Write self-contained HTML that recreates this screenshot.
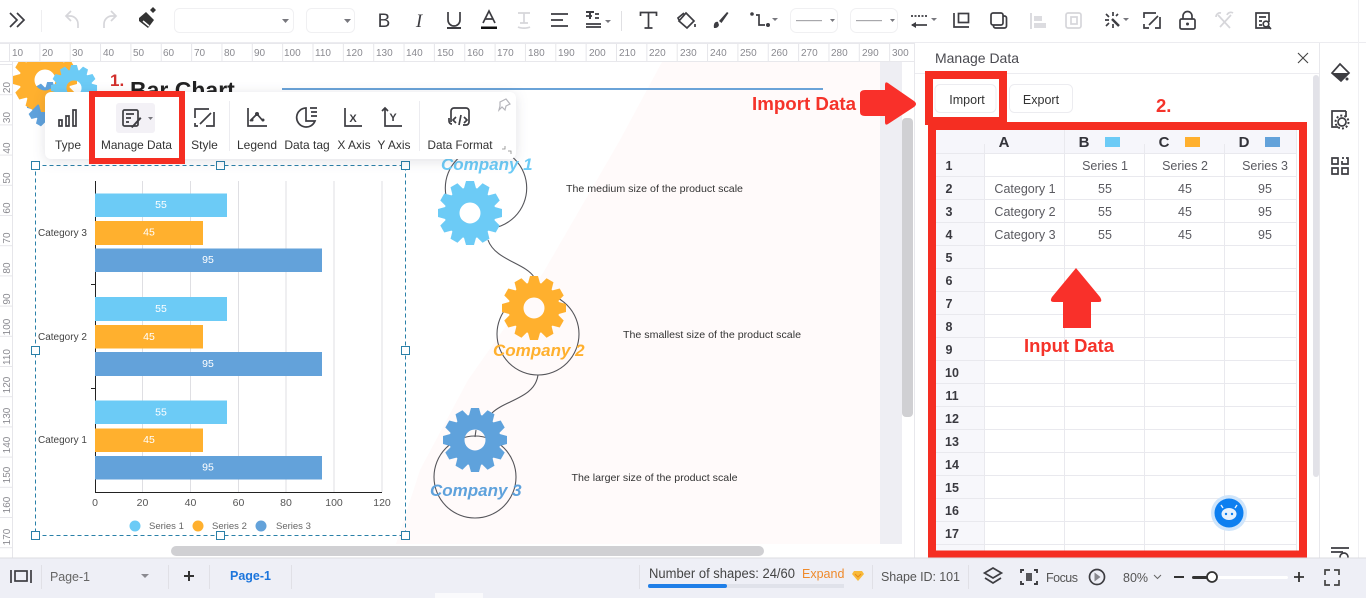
<!DOCTYPE html>
<html><head><meta charset="utf-8"><title>Manage Data</title>
<style>
html,body{margin:0;padding:0;background:#fff;width:1366px;height:598px;overflow:hidden}
svg{display:block}
text{font-family:"Liberation Sans",sans-serif}
.ic{fill:none;stroke:#3d3d42;stroke-width:1.7}
.gy{fill:none;stroke:#d6d6da;stroke-width:1.7}
.r{font-size:10px;fill:#8a8a90}
.tl{font-size:12px;fill:#333;text-anchor:middle}
.rh{font-size:12.5px;font-weight:bold;fill:#3a3a40;text-anchor:middle}
.cell{font-size:12.5px;fill:#5a5a60;text-anchor:middle}
.hd{font-size:15px;font-weight:bold;fill:#33333a;text-anchor:middle}
.bl{font-size:10.5px;fill:#fff;text-anchor:middle}
.ax{font-size:10.5px;fill:#555;text-anchor:middle}
.cat{font-size:10px;fill:#444}
.lg{font-size:9.5px;fill:#666}
.co{font-size:17px;font-weight:bold;font-style:italic}
.de{font-size:10.5px;fill:#333}
.red{font-weight:bold;fill:#f5332a}
.st{font-size:12.5px;fill:#555}
</style></head><body>
<svg width="1366" height="598" viewBox="0 0 1366 598" xmlns="http://www.w3.org/2000/svg">
<defs>
<polygon id="tooth" points="23,-6.500 32,-4 32,4 23,6.500" fill="currentColor"/>
<g id="gear">
<use href="#tooth"/><use href="#tooth" transform="rotate(30)"/><use href="#tooth" transform="rotate(60)"/><use href="#tooth" transform="rotate(90)"/><use href="#tooth" transform="rotate(120)"/><use href="#tooth" transform="rotate(150)"/><use href="#tooth" transform="rotate(180)"/><use href="#tooth" transform="rotate(210)"/><use href="#tooth" transform="rotate(240)"/><use href="#tooth" transform="rotate(270)"/><use href="#tooth" transform="rotate(300)"/><use href="#tooth" transform="rotate(330)"/>
<circle r="18" fill="none" stroke="currentColor" stroke-width="15"/></g>
<clipPath id="cv"><rect x="13" y="62" width="867" height="482"/></clipPath>
<pattern id="tx" x="9" y="43" width="30.35" height="19" patternUnits="userSpaceOnUse"><rect width="1" height="19" fill="#e6e6ea"/></pattern>
<pattern id="ty" x="0" y="64" width="13" height="30.2" patternUnits="userSpaceOnUse"><rect width="13" height="1" fill="#e6e6ea"/></pattern>
</defs>

<rect width="1366" height="598" fill="#fff"/>

<!-- canvas -->
<g clip-path="url(#cv)">
<polygon points="662,62 880,62 880,544 396,544 420,470 468,380 543,273 620,140" fill="#fffafa"/>
<use href="#gear" transform="translate(50 105) scale(.72)" style="color:#5fa2dc"/>
<use href="#gear" transform="translate(45 80)" style="color:#ffb02e"/>
<use href="#gear" transform="translate(74 88) scale(.72)" style="color:#6ccbf6"/>
<text x="130" y="98" font-size="23" font-weight="bold" fill="#222">Bar Chart</text>
<rect x="282" y="88" width="541" height="2" fill="#6aa3d8"/>
<text x="110" y="86" font-size="17" font-weight="bold" fill="#d2302c">1.</text>

<!-- right infographic -->
<g fill="none" stroke="#55555a" stroke-width="1.1">
<circle cx="486" cy="188" r="40.7"/><circle cx="538" cy="334" r="41"/><circle cx="475" cy="477" r="41"/>
<path d="M488 240C495 260 525 263 534 277M538 375C535 398 505 400 492 413M476 430L475 437"/>
</g>
<use href="#gear" transform="translate(470 213)" style="color:#6ccbf6"/>
<use href="#gear" transform="translate(534 308)" style="color:#ffb02e"/>
<use href="#gear" transform="translate(475 440)" style="color:#5fa2dc"/>
<text class="co" x="441" y="170" fill="#6ccbf6">Company 1</text>
<text class="co" x="493" y="356" fill="#ffb02e">Company 2</text>
<text class="co" x="430" y="496" fill="#5fa2dc">Company 3</text>
<text class="de" x="566" y="192" textLength="177" lengthAdjust="spacingAndGlyphs">The medium size of the product scale</text>
<text class="de" x="623" y="338" textLength="178" lengthAdjust="spacingAndGlyphs">The smallest size of the product scale</text>
<text class="de" x="571.5" y="481" textLength="166" lengthAdjust="spacingAndGlyphs">The larger size of the product scale</text>

<!-- chart -->
<g stroke="#dfdfe3" stroke-width="1">
<path d="M142.5 181V492M190.5 181V492M238.5 181V492M286 181V492M334 181V492M382 181V492"/>
</g>
<path d="M95.5 181V493M95 492.5H382M91 284.5H95M91 388.5H95" stroke="#222" stroke-width="1" fill="none"/>
<g fill="#6ccbf6"><rect x="95" y="193.500" width="132" height="23.500"/><rect x="95" y="297" width="132" height="24"/><rect x="95" y="400.500" width="132" height="23.500"/></g>
<g fill="#ffb02e"><rect x="95" y="221" width="108" height="24"/><rect x="95" y="325" width="108" height="23.500"/><rect x="95" y="428.500" width="108" height="23.500"/></g>
<g fill="#63a2da"><rect x="95" y="248.500" width="227" height="23.500"/><rect x="95" y="352" width="227" height="24"/><rect x="95" y="456" width="227" height="23.500"/></g>
<text class="bl" x="161" y="208">55</text><text class="bl" x="149" y="235.500">45</text><text class="bl" x="208" y="263">95</text>
<text class="bl" x="161" y="312">55</text><text class="bl" x="149" y="340">45</text><text class="bl" x="208" y="367">95</text>
<text class="bl" x="161" y="415.500">55</text><text class="bl" x="149" y="443">45</text><text class="bl" x="208" y="470.500">95</text>
<text class="cat" x="38" y="236">Category 3</text><text class="cat" x="38" y="340">Category 2</text><text class="cat" x="38" y="443">Category 1</text>
<text class="ax" x="95" y="506">0</text><text class="ax" x="142.500" y="506">20</text><text class="ax" x="190.500" y="506">40</text><text class="ax" x="238.500" y="506">60</text><text class="ax" x="286" y="506">80</text><text class="ax" x="334" y="506">100</text><text class="ax" x="382" y="506">120</text>
<circle cx="135" cy="526" r="5.500" fill="#6ccbf6"/><circle cx="198" cy="526" r="5.500" fill="#ffb02e"/><circle cx="261" cy="526" r="5.500" fill="#63a2da"/>
<text class="lg" x="149" y="529">Series 1</text><text class="lg" x="212" y="529">Series 2</text><text class="lg" x="276" y="529">Series 3</text>

<!-- selection -->
<rect x="35.500" y="165.500" width="370" height="370" fill="none" stroke="#2a80a8" stroke-dasharray="4 3"/>
<g fill="#fff" stroke="#2a80a8"><rect x="31.500" y="161.500" width="8" height="8"/><rect x="216.500" y="161.500" width="8" height="8"/><rect x="401.500" y="161.500" width="8" height="8"/><rect x="31.500" y="346.500" width="8" height="8"/><rect x="401.500" y="346.500" width="8" height="8"/><rect x="31.500" y="531.500" width="8" height="8"/><rect x="216.500" y="531.500" width="8" height="8"/><rect x="401.500" y="531.500" width="8" height="8"/></g>
</g>

<!-- canvas side gutter and scrollbars -->
<rect x="880" y="62" width="22" height="482" fill="#eeeef3"/>
<rect x="902" y="118" width="11" height="299" rx="4" fill="#d0d0d3"/>
<rect x="171" y="546" width="593" height="10" rx="5" fill="#d0d0d3"/>

<!-- rulers -->
<rect x="13" y="43" width="902" height="19" fill="#fff"/>
<rect x="9" y="43" width="905" height="19" fill="url(#tx)"/>
<rect x="0" y="43" width="914" height="1" fill="#e8e8ec"/><rect x="0" y="61" width="914" height="1" fill="#e8e8ec"/>
<rect x="0" y="62" width="13" height="496" fill="#fff"/>
<rect x="0" y="64" width="13" height="494" fill="url(#ty)"/>
<rect x="12" y="62" width="1" height="496" fill="#e6e6ea"/>
<g class="rx">
<text class="r" x="12" y="56">10</text><text class="r" x="42" y="56">20</text><text class="r" x="72" y="56">30</text><text class="r" x="103" y="56">40</text><text class="r" x="133" y="56">50</text><text class="r" x="163" y="56">60</text><text class="r" x="194" y="56">70</text><text class="r" x="224" y="56">80</text><text class="r" x="254" y="56">90</text><text class="r" x="284" y="56">100</text><text class="r" x="315" y="56">110</text><text class="r" x="346" y="56">120</text><text class="r" x="376" y="56">130</text><text class="r" x="406" y="56">140</text><text class="r" x="437" y="56">150</text><text class="r" x="467" y="56">160</text><text class="r" x="497" y="56">170</text><text class="r" x="528" y="56">180</text><text class="r" x="558" y="56">190</text><text class="r" x="589" y="56">200</text><text class="r" x="619" y="56">210</text><text class="r" x="649" y="56">220</text><text class="r" x="680" y="56">230</text><text class="r" x="710" y="56">240</text><text class="r" x="740" y="56">250</text><text class="r" x="771" y="56">260</text><text class="r" x="801" y="56">270</text><text class="r" x="831" y="56">280</text><text class="r" x="862" y="56">290</text><text class="r" x="892" y="56">300</text>
</g>
<g text-anchor="middle">
<text class="r" transform="translate(10 87.500) rotate(-90)">20</text><text class="r" transform="translate(10 117.500) rotate(-90)">30</text><text class="r" transform="translate(10 148) rotate(-90)">40</text><text class="r" transform="translate(10 178) rotate(-90)">50</text><text class="r" transform="translate(10 208) rotate(-90)">60</text><text class="r" transform="translate(10 238) rotate(-90)">70</text><text class="r" transform="translate(10 268) rotate(-90)">80</text><text class="r" transform="translate(10 299) rotate(-90)">90</text><text class="r" transform="translate(10 327) rotate(-90)">100</text><text class="r" transform="translate(10 357) rotate(-90)">110</text><text class="r" transform="translate(10 385) rotate(-90)">120</text><text class="r" transform="translate(10 416) rotate(-90)">130</text><text class="r" transform="translate(10 445) rotate(-90)">140</text><text class="r" transform="translate(10 475) rotate(-90)">150</text><text class="r" transform="translate(10 505) rotate(-90)">160</text><text class="r" transform="translate(10 537) rotate(-90)">170</text>
</g>

<!-- toolbar -->
<rect x="0" y="42" width="1366" height="1" fill="#ececf0"/>
<path class="ic" d="M10 13l7 7-7 7M17 13l7 7-7 7" stroke-width="1.600"/>
<rect x="41" y="10" width="1" height="22" fill="#eeeef0"/>
<path class="gy" d="M78 28v-4a8 8 0 0 0-8-8h-3M71 11l-5 5 5 5M104 28v-4a8 8 0 0 1 8-8h3M111 11l5 5-5 5"/>
<path d="M139 18l7-6 8 8-6 8-9-7zM150 10l3-3 3 3-3 3z" fill="#333"/><path d="M143 21l6 5" stroke="#fff" stroke-width="1.500"/>
<rect x="174.500" y="8.500" width="119" height="24" rx="5" fill="#fff" stroke="#f0f0f2"/><path d="M282 19h7l-3.500 4z" fill="#77777d"/>
<rect x="306.500" y="8.500" width="48" height="24" rx="5" fill="#fff" stroke="#f0f0f2"/><path d="M344 19h7l-3.500 4z" fill="#77777d"/>

<text x="384" y="27" font-size="19" text-anchor="middle" fill="#3d3d42">B</text>
<text x="419" y="27" font-size="19" font-style="italic" text-anchor="middle" fill="#3d3d42" style="font-family:'Liberation Serif',serif">I</text>
<path class="ic" d="M448 12v8a6 6 0 0 0 12 0v-8"/><rect x="447" y="27" width="14" height="2" fill="#3d3d42"/>
<path class="ic" d="M483 23l6-12 6 12M485 19h8"/><rect x="481" y="26.500" width="16" height="2.500" fill="#111"/>
<path class="gy" d="M518 13h12M524 13v10M520 23h8M518 27c3 1.500 9 1.500 12 0"/>
<path class="ic" d="M551 14h17M551 20h12M551 26h17"/>
<path class="ic" d="M586 24h15M586 27h15M586 16h6M595 14h4M595 18h4"/><path d="M586 11h8v2h-3v6h-2v-6h-3z" fill="#3d3d42"/><path d="M605 20h6l-3 3z" fill="#77777d"/>
<rect x="621" y="11" width="1" height="20" fill="#e0e0e3"/>
<path class="ic" d="M640.500 16v-3.500h16v3.500M648.500 12.500v15.500M644.500 28h8" stroke-width="2"/>
<path class="ic" d="M686 13l8 8-7 7-8-7zM679 20l-1-2 6-5M695 24v3"/>
<path d="M714 28c-1-5 2-7 4-6l1 3c-1 3-3 3-5 3zM719 21l8-9 1.500 1-7 10z" fill="#3d3d42"/>
<circle cx="752" cy="14" r="1.800" fill="#3d3d42"/><circle cx="768" cy="25" r="2" fill="#3d3d42"/><path class="ic" d="M756 15h3v10h6"/><path d="M772 18h6l-3 3z" fill="#77777d"/>
<rect x="790.500" y="8.500" width="47" height="24" rx="6" fill="#fff" stroke="#f0f0f2"/><rect x="796" y="20" width="26" height="1.200" fill="#a8a8ac"/><path d="M830 19h5l-2.500 3z" fill="#77777d"/>
<rect x="850.500" y="8.500" width="47" height="24" rx="6" fill="#fff" stroke="#f0f0f2"/><rect x="856" y="20" width="26" height="1.200" fill="#a8a8ac"/><path d="M890 19h5l-2.500 3z" fill="#77777d"/>
<path class="ic" d="M911 16h16" stroke-dasharray="2 1.500"/><path class="ic" d="M912 25h15"/><path d="M911 25l5-3v6z" fill="#3d3d42"/><path d="M931 18h6l-3 3z" fill="#77777d"/>
<path class="ic" d="M954 13v14h15" stroke-width="1.800"/><rect x="958.500" y="13.500" width="10" height="9" class="ic" stroke-width="1.600"/>
<rect x="991" y="13" width="12" height="12" rx="2" class="ic" stroke-width="1.800"/><path class="ic" d="M1003 16h1.500a2 2 0 0 1 2 2v8a2 2 0 0 1-2 2h-9a2 2 0 0 1-2-2v-1" stroke-width="1.600"/>
<path d="M1030 13h2v16h-2zM1034 16h8v5h-8zM1034 23h12v5h-12z" fill="#dcdce0"/>
<rect x="1066" y="13" width="15" height="15" rx="2" class="gy" stroke-width="2.500"/><rect x="1071" y="17" width="6" height="7" class="gy"/>
<g class="ic"><path d="M1105 20h4M1113 12v4M1106 14l3 3M1106 26l3-3M1113 24v4M1118 14l-2 2"/><path d="M1112 19l7 7" stroke-width="2.500"/></g><path d="M1123 18h6l-3 3z" fill="#77777d"/>
<path class="ic" d="M1144 24v4h5M1144 18v-5h12M1160 17v11h-5" stroke-width="1.900"/><path class="ic" d="M1149 25l9-9" stroke-width="2.500"/>
<rect x="1180" y="19" width="15" height="10" rx="1.500" class="ic" stroke-width="2"/><path class="ic" d="M1183 19v-3a4.500 4.500 0 0 1 9 0v3" stroke-width="2"/><circle cx="1187.500" cy="24" r="1.500" fill="#3d3d42"/>
<path class="gy" d="M1218 15l12 13M1231 15l-11 12M1216 17a4 4 0 0 1 5-4M1227 15a4 4 0 0 1 6-2" stroke-width="2.400"/>
<path class="ic" d="M1269 26v2h-13V13h13v9" stroke-width="1.900"/><path class="ic" d="M1259 17h7M1259 21h3M1259 25h3"/><circle cx="1266" cy="24" r="2.800" class="ic"/><path class="ic" d="M1268 26l3 3"/>

<!-- floating bar -->
<rect x="45" y="92" width="471" height="67" rx="6" fill="#fff" style="filter:drop-shadow(0 2px 6px rgba(40,40,70,.14))"/>
<rect x="116" y="103" width="39" height="30" rx="3" fill="#f3f1f6"/>
<path class="ic" d="M59 120v6h3v-6zM66 116v10h3v-10zM73 110v16h3v-16z" stroke-width="1.800"/>
<rect x="123" y="110" width="15" height="16" rx="1.500" class="ic"/><path class="ic" d="M126 114h8M126 118h5M126 122h3"/><path d="M131 127l9-10 1.500 1.500-9 9.500z" fill="#3d3d42"/><path d="M148 117h5l-2.500 3z" fill="#77777d"/>
<path class="ic" d="M195 118v-9h14M214 112v14h-8M195 123v3h3" stroke-width="1.800"/><path class="ic" d="M200 124l11-11" stroke-width="2.400"/>
<rect x="229" y="101" width="1" height="50" fill="#ececf0"/>
<path class="ic" d="M248 108v18h19"/><path class="ic" d="M250 121l7-7 6 7"/><circle cx="257" cy="114" r="2" fill="#3d3d42"/><circle cx="252" cy="120" r="1.500" fill="#3d3d42"/><circle cx="263" cy="120" r="1.500" fill="#3d3d42"/>
<path class="ic" d="M306 108a9.500 9.500 0 1 0 9 13h-9zM310 108h7M311 112h6M311 116h6" stroke-width="1.800"/>
<path class="ic" d="M345 108v18h17"/><text x="353" y="122" font-size="11" font-weight="bold" text-anchor="middle" fill="#3d3d42">X</text>
<path class="ic" d="M385 108v18h17M382 111l3-3 3 3"/><text x="393" y="121" font-size="11" font-weight="bold" text-anchor="middle" fill="#3d3d42">Y</text>
<rect x="419" y="101" width="1" height="50" fill="#ececf0"/>
<path class="ic" d="M451 122v-11a3 3 0 0 1 3-3h12a3 3 0 0 1 3 3v11a3 3 0 0 1-3 3h-3" stroke-width="1.800"/><path class="ic" d="M449 118v3a3 3 0 0 0 3 3M456 117l-3 3 3 3M464 117l3 3-3 3M461 115l-2 10" stroke-width="1.300"/>
<path d="M500 102l6-3 4 5-4 2-1 4-3-3-3 3 1-4z" fill="none" stroke="#b4b4ba" stroke-width="1.200"/>
<path d="M505 146v3h-3M508 151h3v3" fill="none" stroke="#888" stroke-width=".8"/>
<text class="tl" x="68" y="149">Type</text>
<text class="tl" x="136.500" y="149" textLength="71" lengthAdjust="spacingAndGlyphs">Manage Data</text>
<text class="tl" x="204.500" y="149">Style</text>
<text class="tl" x="257" y="149">Legend</text>
<text class="tl" x="307" y="149">Data tag</text>
<text class="tl" x="354" y="149">X Axis</text>
<text class="tl" x="394" y="149">Y Axis</text>
<text class="tl" x="460" y="149" textLength="65" lengthAdjust="spacingAndGlyphs">Data Format</text>
<rect x="92" y="94" width="90" height="67" fill="none" stroke="#f52e22" stroke-width="6"/>

<!-- data panel -->
<rect x="914" y="43" width="406" height="515" fill="#fff"/>
<rect x="914" y="43" width="1" height="515" fill="#e8e8ec"/>
<rect x="915" y="73" width="405" height="1" fill="#ececf0"/>
<text x="935" y="63" font-size="14" fill="#4a4a50" textLength="84" lengthAdjust="spacingAndGlyphs">Manage Data</text>
<path d="M1298 53l10 10M1308 53l-10 10" stroke="#444" stroke-width="1.100" fill="none"/>
<rect x="1313" y="75" width="6" height="402" rx="3" fill="#e2e2e8"/>
<rect x="1319" y="43" width="1" height="515" fill="#e8e8ec"/>
<rect x="1358" y="0" width="1" height="558" fill="#f0f0f3"/>

<rect x="1009.500" y="84.500" width="63" height="28" rx="5" fill="#fff" stroke="#ececf0"/>
<rect x="935" y="84.500" width="61" height="28" rx="5" fill="#fff" stroke="#ececf0"/>
<text x="967" y="104" font-size="12.500" text-anchor="middle" fill="#333">Import</text>
<text x="1041" y="104" font-size="12.500" text-anchor="middle" fill="#333">Export</text>
<rect x="929" y="75" width="74" height="46" fill="none" stroke="#f52e22" stroke-width="8"/>

<!-- table -->
<rect x="936" y="130" width="363" height="421" fill="#fff"/>
<rect x="936" y="130" width="360" height="24" fill="#f6f6fb"/>
<rect x="936" y="154" width="48" height="397" fill="#f7f7fb"/>
<path d="M936 153.500H1296M936 176.500H1296M936 199.500H1296M936 222.500H1296M936 245.500H1296M936 268.500H1296M936 291.500H1296M936 314.500H1296M936 337.500H1296M936 360.500H1296M936 383.500H1296M936 406.500H1296M936 429.500H1296M936 452.500H1296M936 475.500H1296M936 498.500H1296M936 521.500H1296M936 544.500H1296M984.500 144V551M1064.500 130V551M1144.500 144V551M1224.500 144V551M1296.500 130V551" stroke="#e9e9ee" fill="none"/>
<text class="hd" x="1004" y="147">A</text><text class="hd" x="1084" y="147">B</text><text class="hd" x="1164" y="147">C</text><text class="hd" x="1244" y="147">D</text>
<rect x="1105" y="137" width="15" height="10" fill="#6ccbf6"/><rect x="1185" y="137" width="15" height="10" fill="#ffb02e"/><rect x="1265" y="137" width="15" height="10" fill="#63a2da"/>
<text class="rh" x="949" y="170">1</text><text class="rh" x="949" y="193">2</text><text class="rh" x="949" y="216">3</text><text class="rh" x="949" y="239">4</text><text class="rh" x="949" y="262">5</text><text class="rh" x="949" y="285">6</text><text class="rh" x="949" y="308">7</text><text class="rh" x="949" y="331">8</text><text class="rh" x="949" y="354">9</text><text class="rh" x="952" y="377">10</text><text class="rh" x="952" y="400">11</text><text class="rh" x="952" y="423">12</text><text class="rh" x="952" y="446">13</text><text class="rh" x="952" y="469">14</text><text class="rh" x="952" y="492">15</text><text class="rh" x="952" y="515">16</text><text class="rh" x="952" y="538">17</text>
<text class="cell" x="1105" y="170">Series 1</text><text class="cell" x="1185" y="170">Series 2</text><text class="cell" x="1265" y="170">Series 3</text>
<text class="cell" x="1025" y="193">Category 1</text><text class="cell" x="1105" y="193">55</text><text class="cell" x="1185" y="193">45</text><text class="cell" x="1265" y="193">95</text>
<text class="cell" x="1025" y="216">Category 2</text><text class="cell" x="1105" y="216">55</text><text class="cell" x="1185" y="216">45</text><text class="cell" x="1265" y="216">95</text>
<text class="cell" x="1025" y="239">Category 3</text><text class="cell" x="1105" y="239">55</text><text class="cell" x="1185" y="239">45</text><text class="cell" x="1265" y="239">95</text>
<path d="M932 126H1303V554.500H932Z" fill="none" stroke="#f52e22" stroke-width="8"/>

<!-- robot -->
<circle cx="1229" cy="513" r="18" fill="#cfe5fb"/><circle cx="1229" cy="513" r="14.500" fill="#0d7ff0"/>
<ellipse cx="1229" cy="514" rx="7.500" ry="6" fill="#e8f2fd"/><path d="M1223 508l-2-3M1235 508l2-3" stroke="#e8f2fd" stroke-width="1.400"/><circle cx="1226" cy="514" r="1.200" fill="#0d7ff0"/><circle cx="1232" cy="514" r="1.200" fill="#0d7ff0"/>

<!-- annotations -->
<text class="red" x="752" y="110" font-size="18.500" textLength="104" lengthAdjust="spacingAndGlyphs">Import Data</text>
<text class="red" x="1024" y="352" font-size="18.500" textLength="90" lengthAdjust="spacingAndGlyphs">Input Data</text>
<text class="red" x="1156" y="112" font-size="18.500">2.</text>
<path d="M865 90H885V85Q885 81 888 83L914 101Q918 104 914 107L888 124Q885 126 885 122V116H865Q860 116 860 112V94Q860 90 865 90Z" fill="#f9302a"/>
<path d="M1076 268L1100 297Q1103 302 1099 302H1091V328H1063V302H1054Q1049 302 1052 297Z" fill="#f9302a"/>

<!-- right side bar -->
<path class="ic" d="M1340 64l9 9-8 8-9-8z" stroke-width="1.800"/><path d="M1332 73h17l-8 8z" fill="#3d3d42"/><circle cx="1347" cy="79" r="1.500" fill="#3d3d42"/>
<path class="ic" d="M1346 111h-14v16h6M1346 111v6" stroke-width="1.900"/><circle cx="1342" cy="122" r="4" class="ic" stroke-width="2.500"/><circle cx="1342" cy="122" r="6.500" fill="none" stroke="#3d3d42" stroke-width="2" stroke-dasharray="2 2.100"/>
<path class="ic" d="M1332 158h6v6h-6zM1342 158h2M1348 158v0M1346 158h2v6h-6v-3M1332 168h6v6h-6zM1342 168h6v6h-6z" stroke-width="2.100"/>
<path class="ic" d="M1331 548h18M1331 552h12" stroke-width="1.500"/><circle cx="1344" cy="557" r="4" class="ic"/>

<!-- status bar -->
<rect x="0" y="558" width="1366" height="40" fill="#eeeff6"/>
<rect x="0" y="557.500" width="1366" height="1" fill="#dcdce2"/>
<rect x="435" y="593" width="48" height="5" fill="#fafafc"/>
<path class="ic" d="M11 570v13M31 570v13" stroke-width="1.500"/><rect x="15" y="571" width="12" height="10" class="ic" stroke-width="1.800"/>
<g fill="#e0e0e6"><rect x="41" y="565" width="1" height="24"/><rect x="168" y="565" width="1" height="24"/><rect x="209" y="565" width="1" height="24"/><rect x="291" y="565" width="1" height="24"/><rect x="639" y="565" width="1" height="24"/><rect x="872" y="565" width="1" height="24"/><rect x="968" y="565" width="1" height="24"/></g>
<text x="50" y="581" font-size="12.500" fill="#666" textLength="40">Page-1</text>
<path d="M141 574h8l-4 4z" fill="#8a8a90"/>
<path d="M184 576h10M189 571v10" stroke="#333" stroke-width="2"/>
<text x="230" y="580" font-size="12.500" font-weight="bold" fill="#1b75dc" textLength="41">Page-1</text>
<text x="649" y="578" font-size="13.500" fill="#444" textLength="146" lengthAdjust="spacingAndGlyphs">Number of shapes: 24/60</text>
<rect x="648" y="584" width="196" height="4" fill="#e0e2ea"/><rect x="648" y="584" width="79" height="4" rx="2" fill="#1f7fe8"/>
<text x="802" y="578" font-size="12.500" fill="#ef8a2b">Expand</text>
<path d="M852 574l2-3h8l2 3-6 7z" fill="#f8ba3a"/><path d="M855 574l3 3 3-3" stroke="#e88a1a" fill="none"/>
<text class="st" x="881" y="581" textLength="79">Shape ID: 101</text>
<path class="ic" d="M993 568l8.500 5-8.500 5-8.500-5zM985 578l8 5 8-5" stroke-width="1.900"/>
<path d="M1021 573v-3h3M1034 570h3v3M1037 581v3h-3M1024 584h-3v-3" fill="none" stroke="#3d3d42" stroke-width="1.900"/><rect x="1026" y="573" width="6" height="8" fill="#55555a"/>
<text class="st" x="1046" y="582" textLength="32">Focus</text>
<circle cx="1097" cy="577" r="7.500" class="ic" stroke-width="1.800"/><path d="M1094.500 572.500l6 4.500-6 4.500z" fill="#88888e"/>
<text class="st" x="1123" y="582" textLength="25">80%</text>
<path d="M1154 575l3.500 3.500 3.500-3.500" fill="none" stroke="#666" stroke-width="1"/>
<rect x="1174" y="576" width="10" height="2" fill="#333"/>
<rect x="1192" y="576" width="96" height="3" rx="1.500" fill="#fff"/><rect x="1192" y="576" width="20" height="3" rx="1.500" fill="#333"/>
<circle cx="1212" cy="577" r="5" fill="#fff" stroke="#333" stroke-width="1.800"/>
<path d="M1294 577h10M1299 572v10" stroke="#333" stroke-width="1.800"/>
<path d="M1325 575v-5h5M1334 570h5v5M1339 580v5h-5M1330 585h-5v-5" fill="none" stroke="#444" stroke-width="1.700"/>
</svg>
</body></html>
